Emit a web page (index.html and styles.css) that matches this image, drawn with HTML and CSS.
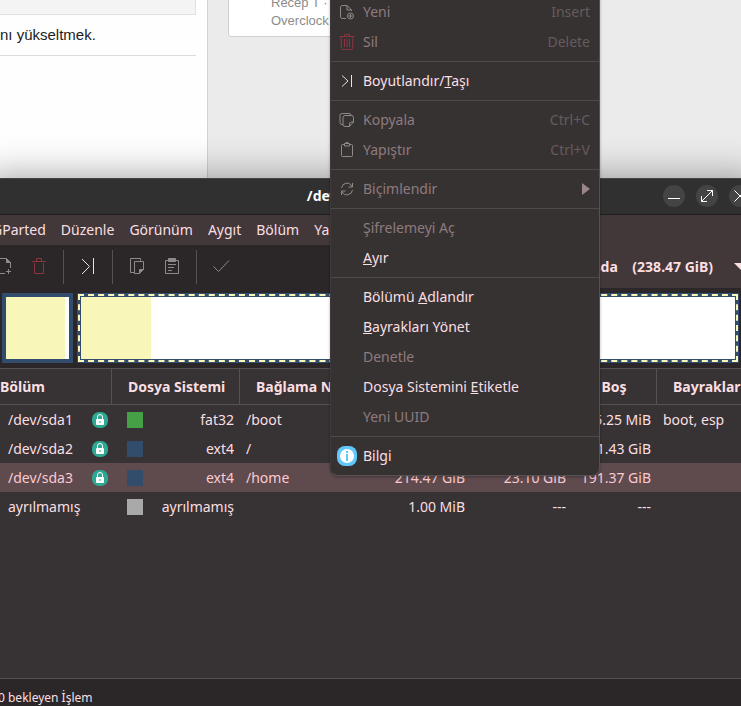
FILE: index.html
```html
<!DOCTYPE html>
<html lang="tr">

<head>
    <meta charset="UTF-8">
    <meta name="viewport" content="width=device-width, initial-scale=1.0">
    <title>/dev/sda - GParted</title>
    <link rel="stylesheet" href="styles.css">
</head>

<body>
    <div class="browser">
        <div class="post">
            <div class="quote"></div>
            <p class="post-text">nı yükseltmek.</p>
        </div>
        <div class="sidebar">
            <div class="card">
                <div>Recep T ·</div>
                <div>Overclock</div>
            </div>
        </div>
    </div>

    <div class="window">
        <div class="titlebar">
            <div class="title">/dev/sda - GParted</div>
            <div class="window-buttons">
                <button class="round" aria-label="Simge durumuna küçült">
                    <svg width="22" height="22" viewBox="0 0 22 22"><path d="M5 13.5h12"/></svg>
                </button>
                <button class="round" aria-label="Büyüt">
                    <svg width="22" height="22" viewBox="0 0 22 22"><path d="M5.5 16.5l11-11M11 5.5h5.5V11M5.5 11v5.5H11"/></svg>
                </button>
                <button class="round" aria-label="Kapat">
                    <svg width="22" height="22" viewBox="0 0 22 22"><path d="M5.5 5.5l11 11M16.5 5.5l-11 11"/></svg>
                </button>
            </div>
        </div>

        <div class="menubar">
            <button>GParted</button>
            <button>Düzenle</button>
            <button>Görünüm</button>
            <button>Aygıt</button>
            <button>Bölüm</button>
            <button>Yardım</button>
        </div>

        <div class="toolbar">
            <button class="tool" aria-label="Yeni">
                <svg width="20" height="20" viewBox="0 0 20 20" class="dim"><path d="M11 17.5H4.5v-15h8l4 4V12M12.5 3v3.5h4M14.5 13v5M12 15.5h5"/><path class="fill" d="M12.5 2.5l4 4h-4z"/></svg>
            </button>
            <button class="tool" aria-label="Sil">
                <svg width="20" height="20" viewBox="0 0 20 20" class="red"><path d="M3 5.5h14M7.5 5V2.5h5V5M5.5 7v10.5h9V7"/></svg>
            </button>
            <span class="divider"></span>
            <button class="tool" aria-label="Boyutlandır/Taşı">
                <svg width="20" height="20" viewBox="0 0 20 20" class="light"><path d="M4 3l7.5 7.5L4 18M15.5 2v16"/></svg>
            </button>
            <span class="divider"></span>
            <button class="tool" aria-label="Kopyala">
                <svg width="20" height="20" viewBox="0 0 20 20" class="dim"><path d="M7 16.5H3.5v-14h10v2M7.5 5.5h9v8l-4 4h-5z"/><path class="fill" d="M12.5 17.5v-4h4z"/></svg>
            </button>
            <button class="tool" aria-label="Yapıştır">
                <svg width="20" height="20" viewBox="0 0 20 20" class="dim"><path d="M6 4.5H3.5v13h13v-13H14M6 8.5h8M6 11.5h6M6 14.5h4"/><path class="fill" d="M6.5 2.5h7v3h-7z"/></svg>
            </button>
            <span class="divider"></span>
            <button class="tool" aria-label="Uygula">
                <svg width="20" height="20" viewBox="0 0 20 20" class="dim"><path d="M2.5 10.5l5 5L18 4.5"/></svg>
            </button>
            <label class="device">
                <select aria-label="Aygıt">
                    <option>/dev/sda &nbsp;&nbsp; (238.47 GiB)</option>
                </select>
            </label>
        </div>

        <div class="disk">
            <div class="part"><div class="used"></div></div>
            <div class="part selected"><div class="used"></div></div>
        </div>

        <div class="list">
            <table>
                <colgroup>
                    <col class="c-part">
                    <col class="c-fs">
                    <col class="c-mount">
                    <col class="c-size">
                    <col class="c-used">
                    <col class="c-free">
                    <col>
                </colgroup>
                <thead>
                    <tr>
                        <th>Bölüm</th>
                        <th>Dosya Sistemi</th>
                        <th>Bağlama Noktası</th>
                        <th>Boyut</th>
                        <th>Kullanılan</th>
                        <th class="center">Boş</th>
                        <th>Bayraklar</th>
                    </tr>
                </thead>
                <tbody>
                    <tr>
                        <td><div class="name">/dev/sda1 <svg width="16" height="16" viewBox="0 0 16 16"><use href="#lock"/></svg></div></td>
                        <td><div class="fs"><i class="swatch green"></i>fat32</div></td>
                        <td>/boot</td>
                        <td></td>
                        <td></td>
                        <td class="num">5.25 MiB</td>
                        <td>boot, esp</td>
                    </tr>
                    <tr>
                        <td><div class="name">/dev/sda2 <svg width="16" height="16" viewBox="0 0 16 16"><use href="#lock"/></svg></div></td>
                        <td><div class="fs"><i class="swatch blue"></i>ext4</div></td>
                        <td>/</td>
                        <td></td>
                        <td></td>
                        <td class="num">1.43 GiB</td>
                        <td></td>
                    </tr>
                    <tr class="active">
                        <td><div class="name">/dev/sda3 <svg width="16" height="16" viewBox="0 0 16 16"><use href="#lock"/></svg></div></td>
                        <td><div class="fs"><i class="swatch blue"></i>ext4</div></td>
                        <td>/home</td>
                        <td class="num">214.47 GiB</td>
                        <td class="num">23.10 GiB</td>
                        <td class="num">191.37 GiB</td>
                        <td></td>
                    </tr>
                    <tr>
                        <td><div class="name">ayrılmamış</div></td>
                        <td><div class="fs"><i class="swatch gray"></i>ayrılmamış</div></td>
                        <td></td>
                        <td class="num">1.00 MiB</td>
                        <td class="num">---</td>
                        <td class="num">---</td>
                        <td></td>
                    </tr>
                </tbody>
            </table>
        </div>

        <div class="status">0 bekleyen İşlem</div>
    </div>

    <div class="menu" role="menu">
        <button class="item" disabled>
            <svg width="16" height="16" viewBox="0 0 16 16" class="dim"><path d="M7 14.5H3.5a2 2 0 0 1-2-2v-9a2 2 0 0 1 2-2H8L12.5 6v1M8 1.5V6h4.5"/><circle cx="11.5" cy="12" r="3"/><path d="M11.5 10v4M9.5 12h4"/></svg>
            <span>Yeni</span><kbd>Insert</kbd>
        </button>
        <button class="item" disabled>
            <svg width="16" height="16" viewBox="0 0 16 16" class="red"><path d="M.5 2.5h15M5.5 2V.5h5V2M2 3l.5 11.5q0 1 1 1h9q1 0 1-1L14 3M5.5 5v8M8 5v8M10.5 5v8"/></svg>
            <span>Sil</span><kbd>Delete</kbd>
        </button>
        <hr>
        <button class="item">
            <svg width="16" height="16" viewBox="0 0 16 16" class="light"><path d="M3 2.5L9 8l-6 5.5M12.5 2v12"/></svg>
            <span>Boyutlandır/<u>T</u>aşı</span>
        </button>
        <hr>
        <button class="item" disabled>
            <svg width="16" height="16" viewBox="0 0 16 16" class="dim"><path d="M4 12.5H3a2 2 0 0 1-2-2v-7a2 2 0 0 1 2-2h7a2 2 0 0 1 2 2M6 3.5h6.5a2 2 0 0 1 2 2V10l-4 4.5H6a2 2 0 0 1-2-2v-7a2 2 0 0 1 2-2zM14.5 10h-2a2 2 0 0 0-2 2v2.5"/></svg>
            <span>Kopyala</span><kbd>Ctrl+C</kbd>
        </button>
        <button class="item" disabled>
            <svg width="16" height="16" viewBox="0 0 16 16" class="dim"><path d="M5 2.5H3.5a1 1 0 0 0-1 1v10a1 1 0 0 0 1 1h9a1 1 0 0 0 1-1v-10a1 1 0 0 0-1-1H11M5.5 1.5h5V4h-5zM7 1.5V.5h2v1"/></svg>
            <span>Yapıştır</span><kbd>Ctrl+V</kbd>
        </button>
        <hr>
        <button class="item" disabled>
            <svg width="16" height="16" viewBox="0 0 16 16" class="dim"><path d="M2.5 7A5.5 5.5 0 0 1 13 5.5M13.5 2v4h-4M13.5 9A5.5 5.5 0 0 1 3 10.5M2.5 14v-4h4"/></svg>
            <span>Biçimlendir</span><i class="arrow"></i>
        </button>
        <hr>
        <button class="item" disabled><span>Şifrelemeyi Aç</span></button>
        <button class="item"><span><u>A</u>yır</span></button>
        <hr>
        <button class="item"><span>Bölümü <u>A</u>dlandır</span></button>
        <button class="item"><span><u>B</u>ayrakları Yönet</span></button>
        <button class="item" disabled><span>Denetle</span></button>
        <button class="item"><span>Dosya Sistemini <u>E</u>tiketle</span></button>
        <button class="item" disabled><span>Yeni UUID</span></button>
        <hr>
        <button class="item">
            <svg width="20" height="20" viewBox="0 0 20 20"><rect width="20" height="20" rx="8" fill="#62c8fb"/><circle cx="10" cy="10" r="7" fill="#fff"/><path d="M9 5h2v2H9zM9 8h2v7H9z" fill="#62c8fb"/></svg>
            <span>Bilgi</span>
        </button>
    </div>

    <svg class="symbols" width="0" height="0" aria-hidden="true">
        <symbol id="lock" viewBox="0 0 16 16">
            <rect width="16" height="16" rx="7" fill="#2ea893"/>
            <path d="M5.5 7V5a2.5 2.5 0 0 1 5 0v2" fill="none" stroke="#fff"/>
            <rect x="4" y="7" width="8" height="6" rx="1" fill="#fff"/>
            <path d="M7.5 9h1v2h-1z" fill="#2ea893"/>
        </symbol>
    </svg>
</body>

</html>
```
FILE: styles.css
```css
* {
    box-sizing: border-box;
}

body {
    position: relative;
    display: flex;
    flex-direction: column;
    min-height: 100vh;
    margin: 0;
    overflow: hidden;
    background-color: #ebebeb;
    color: #fadfe2;
    font: 14px/20px "Noto Sans", sans-serif;
}

button,
select {
    margin: 0;
    padding: 0;
    border: none;
    background: none;
    color: inherit;
    font: inherit;
}

svg {
    display: block;
    fill: none;
    stroke-width: 1;
}

.dim {
    stroke: #8e8a8a;
}

.dim .fill {
    fill: #8e8a8a;
}

.red {
    stroke: #8c353f;
}

.light {
    stroke: #e6e2e2;
}

.symbols {
    position: absolute;
}

/* page behind the window */
.browser {
    display: flex;
    height: 178px;
    font-family: "Liberation Sans", Arial, sans-serif;
}

.post {
    width: 208px;
    padding-right: 11px;
    border-right: 1px solid #d2d2d2;
    background-color: #fefefe;
}

.quote {
    height: 15px;
    border: 1px solid #e0e0e0;
    border-width: 0 1px 1px 0;
    background-color: #f4f4f4;
}

.post-text {
    margin: 0;
    padding: 10px 0;
    border-bottom: 1px solid #dcdcdc;
    color: #1c1c1c;
    font-size: 15px;
}

.sidebar {
    flex: 1;
    padding-left: 20px;
}

.card {
    max-width: 340px;
    margin-top: -17px;
    padding: 10px 0 6px 42px;
    border: 1px solid #cfcfcf;
    border-radius: 3px;
    background-color: #fff;
    color: #8c8c8c;
    font-size: 13px;
    line-height: 18px;
}

/* the window is wider than the screen on both sides */
.window {
    flex: 1;
    display: flex;
    flex-direction: column;
    margin: 0 -20px 0 -16px;
    border-top: 1px solid #434343;
    background-color: #2b2728;
    box-shadow: 0 0 36px rgba(0, 0, 0, 0.4);
}

.titlebar {
    display: grid;
    grid-template-columns: 1fr auto 1fr;
    align-items: center;
    height: 36px;
    padding: 0 10px 2px 8px;
    border-bottom: 1px solid #201e1e;
    background-color: #303030;
    color: #fff;
}

.title {
    grid-column: 2;
    font-weight: bold;
}

.window-buttons {
    display: flex;
    justify-content: flex-end;
    gap: 11px;
}

.round {
    border-radius: 50%;
    background-color: #444;
}

.round svg {
    stroke: #fff;
}

.menubar {
    display: flex;
    height: 30px;
    background-color: #433839;
}

.menubar button {
    padding: 0 7px 0 8px;
}

.toolbar {
    display: flex;
    align-items: center;
    height: 43px;
    padding-left: 3px;
}

.tool {
    width: 35px;
    padding: 0 8px 2px 7px;
}

.divider {
    width: 1px;
    height: 34px;
    margin: 0 7px 0 6px;
    background-color: #575152;
}

.device {
    position: relative;
    display: flex;
    align-self: stretch;
    margin-left: auto;
    background-color: #433839;
}

.device select {
    appearance: none;
    padding: 0 47px 0 12px;
    font-weight: bold;
}

.device::after {
    content: "";
    position: absolute;
    top: 18px;
    right: 13px;
    border: 7px solid transparent;
    border-top-color: #fadfe2;
    border-bottom: none;
}

.disk {
    display: flex;
    gap: 4px;
    height: 80px;
    padding: 5px 22px 5px 18px;
}

.part {
    display: flex;
    width: 71px;
    border: 4px solid #314d6b;
    background-color: #fff;
}

.used {
    width: 59px;
    background-color: #f8f7b9;
}

.selected {
    flex: 1;
    outline: 2px dashed #f8f7b9;
    outline-offset: -3px;
}

.selected .used {
    width: 70px;
}

.list {
    flex: 1;
    border: 1px solid #565051;
    border-width: 1px 0;
    background-color: #373233;
}

table {
    width: 100%;
    border-collapse: separate;
    border-spacing: 0;
    table-layout: fixed;
}

.c-part,
.c-fs {
    width: 128px;
}

.c-mount {
    width: 141px;
}

.c-size {
    width: 90px;
}

.c-used {
    width: 101px;
}

.c-free {
    width: 85px;
}

th {
    height: 36px;
    padding: 0 0 0 16px;
    border-right: 1px solid #565051;
    border-bottom: 1px solid #565051;
    text-align: left;
    white-space: nowrap;
}

th.center {
    padding: 0;
    text-align: center;
}

td {
    height: 29px;
    padding: 0 6px;
    white-space: nowrap;
}

.num {
    text-align: right;
}

.name {
    display: flex;
    align-items: center;
    justify-content: space-between;
    margin-right: -2px;
    padding-left: 18px;
}

.fs {
    display: flex;
    align-items: center;
    justify-content: space-between;
    padding-left: 9px;
}

.swatch {
    width: 16px;
    height: 16px;
}

.green {
    background-color: #46a046;
}

.blue {
    background-color: #314d6b;
}

.gray {
    background-color: #a9a9a9;
}

.active {
    background-color: #5f4b4e;
    color: #fcc9d1;
}

.status {
    height: 27px;
    padding: 9px 14px 0;
    font-size: 12px;
}

/* context menu */
.menu {
    position: absolute;
    top: -8px;
    left: 330px;
    width: 270px;
    padding: 4px 0;
    border: 1px solid #565152;
    border-left-color: #3e393a;
    border-radius: 8px;
    background-color: #373232;
    box-shadow: 0 1px 3px rgba(0, 0, 0, 0.3);
}

.item {
    display: grid;
    grid-template-columns: 20px 1fr auto;
    column-gap: 6px;
    align-items: center;
    justify-items: center;
    width: 100%;
    height: 30px;
    padding: 0 9px 0 6px;
    text-align: left;
}

.item span {
    grid-column: 2;
    justify-self: start;
}

.item:disabled {
    color: #8d7b7e;
}

.item kbd {
    color: #665b5c;
    font: inherit;
}

.menu hr {
    height: 1px;
    margin: 4px 0;
    border: none;
    background-color: #4f494a;
}

.arrow {
    border: 6px solid transparent;
    border-left: 8px solid #9a8689;
    border-right: none;
}
```
